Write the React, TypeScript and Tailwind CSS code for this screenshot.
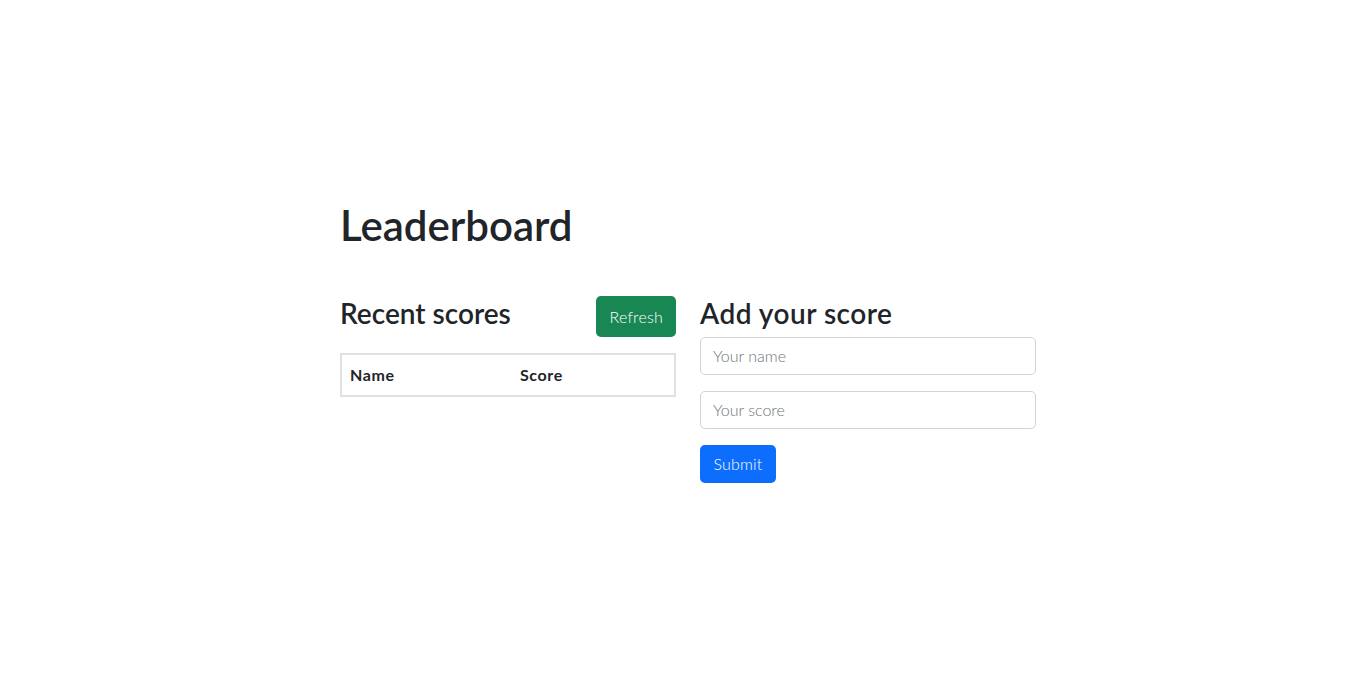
import React from "react";

export default function App() {
  return (
    <div className="min-h-[680px] w-full bg-white text-[#212529]" style={{ fontFamily: "Lato, 'Noto Sans', sans-serif" }}>
      <div className="ml-[340px] w-[696px] pt-[200px]">
        <h1 className="text-[42px] leading-[1.2] font-semibold mb-[46px]">Leaderboard</h1>
        <div className="flex gap-[24px]">
          <div className="w-[336px]">
            <div className="flex items-center justify-between mb-[16px]">
              <h3 className="text-[28px] leading-[1.2] font-semibold -mt-[6px]">Recent scores</h3>
              <button className="h-[41px] px-[13px] rounded-[5px] bg-[#198754] text-white text-[16px] font-light tracking-[0.2px]">Refresh</button>
            </div>
            <table className="w-full border-2 border-[#dee2e6] border-collapse">
              <thead>
                <tr>
                  <th className="w-[171px] text-left px-[8px] py-[8px] text-[16px] font-bold tracking-[0.6px]">Name</th>
                  <th className="text-left px-[8px] py-[8px] text-[16px] font-bold tracking-[0.6px]">Score</th>
                </tr>
              </thead>
            </table>
          </div>
          <div className="w-[336px] pt-[1px]">
            <h3 className="text-[28px] leading-[1.2] font-semibold tracking-[0.5px] mb-[6px]">Add your score</h3>
            <input
              placeholder="Your name"
              className="block w-full h-[38px] px-[12px] border border-[#ced4da] rounded-[5px] text-[16px] font-light placeholder:text-[#6c757d] mb-[16px]"
            />
            <input
              placeholder="Your score"
              className="block w-full h-[38px] px-[12px] border border-[#ced4da] rounded-[5px] text-[16px] font-light placeholder:text-[#6c757d] mb-[16px]"
            />
            <button className="h-[38px] w-[76px] rounded-[5px] bg-[#0d6efd] text-white text-[16px] font-light tracking-[0.2px]">Submit</button>
          </div>
        </div>
      </div>
    </div>
  );
}
